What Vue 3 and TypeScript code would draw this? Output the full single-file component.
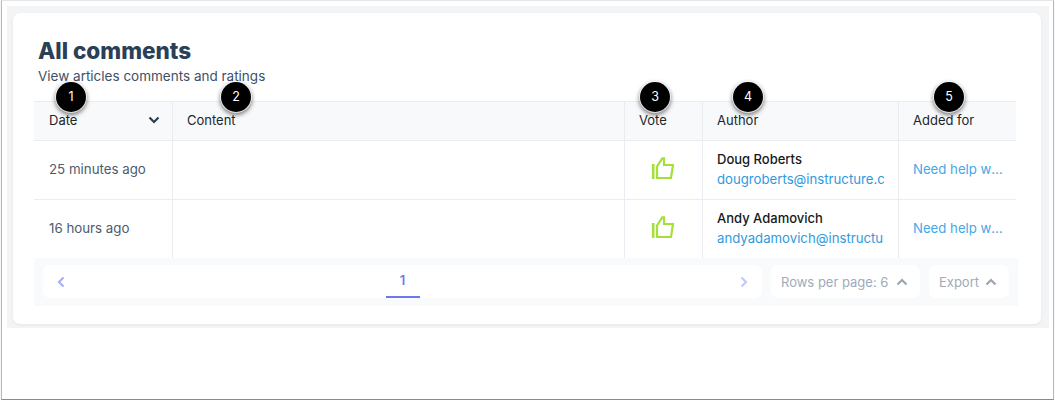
<script setup lang="ts">
interface CommentRow {
  date: string
  name: string
  email: string
  article: string
}

const columns = [
  { key: 'date', label: 'Date', badge: 1 },
  { key: 'content', label: 'Content', badge: 2 },
  { key: 'vote', label: 'Vote', badge: 3 },
  { key: 'author', label: 'Author', badge: 4 },
  { key: 'added', label: 'Added for', badge: 5 },
]

const rows: CommentRow[] = [
  { date: '25 minutes ago', name: 'Doug Roberts', email: 'dougroberts@instructure.com', article: 'Need help with this article' },
  { date: '16 hours ago', name: 'Andy Adamovich', email: 'andyadamovich@instructure.com', article: 'Need help with this article' },
]
</script>

<template>
  <div class="window">
    <div class="page">
      <section class="card">
        <h1 class="title">All comments</h1>
        <p class="subtitle">View articles comments and ratings</p>

        <div class="table">
          <div class="row head">
            <div v-for="col in columns" :key="col.key" :class="`cell cell-${col.key}`">
              <span class="badge" :class="`badge-${col.key}`">{{ col.badge }}</span>
              <span>{{ col.label }}</span>
              <svg v-if="col.key === 'date'" class="sort" width="12" height="8" viewBox="0 0 12 8">
                <path d="M1.5 1.5 6 6l4.5-4.5" fill="none" stroke="#2b3f52" stroke-width="2.2" />
              </svg>
            </div>
          </div>

          <div v-for="(row, i) in rows" :key="row.email" class="row body" :class="{ last: i === rows.length - 1 }">
            <div class="cell cell-date">{{ row.date }}</div>
            <div class="cell cell-content"></div>
            <div class="cell cell-vote">
              <svg width="24" height="24" viewBox="0 0 24 24" fill="none" stroke="#a4e03c" stroke-width="2.2">
                <path d="M2.2 8V23" stroke-width="2.6" />
                <path d="M6 22V10.5L11.3 2.3H13V9H22L20 22Z" />
              </svg>
            </div>
            <div class="cell cell-author">
              <div class="author-name">{{ row.name }}</div>
              <a class="author-email">{{ row.email }}</a>
            </div>
            <div class="cell cell-added">
              <a class="article">{{ row.article }}</a>
            </div>
          </div>

          <div class="footer">
            <div class="pager box">
              <svg width="8" height="12" viewBox="0 0 8 12">
                <path d="M6.5 1.5 2 6l4.5 4.5" fill="none" stroke="#a9adfb" stroke-width="2.2" />
              </svg>
              <span class="page-num">1</span>
              <svg width="8" height="12" viewBox="0 0 8 12">
                <path d="M1.5 1.5 6 6l-4.5 4.5" fill="none" stroke="#c4c7fc" stroke-width="2.2" />
              </svg>
            </div>
            <div class="box select rows-select">
              <span>Rows per page: 6</span>
              <svg width="12" height="8" viewBox="0 0 12 8">
                <path d="M1.5 6.5 6 2l4.5 4.5" fill="none" stroke="#9aa5b5" stroke-width="2.2" />
              </svg>
            </div>
            <div class="box select export-select">
              <span>Export</span>
              <svg width="12" height="8" viewBox="0 0 12 8">
                <path d="M1.5 6.5 6 2l4.5 4.5" fill="none" stroke="#9aa5b5" stroke-width="2.2" />
              </svg>
            </div>
          </div>
        </div>
      </section>
    </div>
  </div>
</template>

<style>
html,
body {
  margin: 0;
  background: #fff;
}
</style>

<style scoped>
.window {
  box-sizing: border-box;
  width: 1053px;
  height: 400px;
  margin-left: 1px;
  padding: 5px 4px 0 5px;
  background: #fff;
  border-top: 1px solid #e6e6e6;
  border-left: 1px solid #b9b9b9;
  border-right: 1px solid #b9b9b9;
  border-bottom: 1px solid #8a8a8a;
  box-shadow: 0 1px 1px rgba(0, 0, 0, 0.2);
  font-family: Inter, "Open Sans", sans-serif;
  overflow: hidden;
}

.page {
  box-sizing: border-box;
  height: 322px;
  padding: 7px 8px 4px 6px;
  background: #f3f4f5;
}

.card {
  box-sizing: border-box;
  height: 311px;
  padding: 25px 22px 0 21px;
  background: #fff;
  border-radius: 7px;
  box-shadow: 0 1px 3px rgba(0, 0, 0, 0.06);
}

.title {
  margin: 0 0 0 4px;
  font-size: 22.5px;
  line-height: 26px;
  font-weight: 800;
  color: #2a4056;
}

.subtitle {
  margin: 4px 0 0 4px;
  font-size: 13.5px;
  line-height: 17px;
  color: #3d5166;
}

.table {
  margin-top: 16px;
}

.row {
  display: flex;
  width: 982px;
}

.head {
  height: 40px;
  background: #f8f9fb;
  border-top: 1px solid #e9edf2;
  border-bottom: 1px solid #e9edf2;
  box-sizing: border-box;
  font-size: 13px;
  color: #20262c;
}

.body {
  height: 59px;
  box-sizing: border-box;
  border-bottom: 1px solid #e9edf2;
  font-size: 13.3px;
  color: #4a5c70;
}

.body.last {
  height: 58px;
  border-bottom: 0;
}

.cell {
  position: relative;
  box-sizing: border-box;
  display: flex;
  align-items: center;
  padding-left: 14px;
  padding-bottom: 2px;
  border-right: 1px solid #e9edf2;
}

.cell-date {
  width: 139px;
  padding-left: 15px;
}

.cell-content {
  width: 452px;
}

.cell-vote {
  width: 78px;
}

.cell-author {
  width: 196px;
  flex-direction: column;
  align-items: flex-start;
  justify-content: center;
  gap: 4px;
}

.cell-added {
  width: 117px;
  border-right: 0;
}

.head .cell-date {
  justify-content: space-between;
  padding-right: 12px;
}

.body .cell-vote {
  justify-content: center;
  padding-left: 0;
  padding-right: 1px;
  padding-bottom: 4px;
}

.badge {
  position: absolute;
  top: -20px;
  width: 30px;
  height: 30px;
  border-radius: 50%;
  background: #000;
  color: #fff;
  font-size: 12.5px;
  line-height: 30px;
  text-align: center;
  box-shadow: 0 0 0 1px rgba(255, 255, 255, 0.7), 0 2px 4px 1px rgba(0, 0, 0, 0.5);
}

.badge-date {
  left: 22px;
}

.badge-content {
  left: 48px;
}

.badge-vote {
  left: 15px;
}

.badge-author {
  left: 30px;
}

.badge-added {
  left: 35px;
}

.author-name {
  font-size: 13px;
  font-weight: 500;
  color: #16191c;
}

.author-email {
  display: block;
  width: 167px;
  overflow: hidden;
  white-space: nowrap;
  font-size: 13.2px;
  color: #2f9ae0;
}

.article {
  display: block;
  width: 90px;
  overflow: hidden;
  white-space: nowrap;
  text-overflow: ellipsis;
  font-size: 13.2px;
  color: #45a8e6;
}

.footer {
  box-sizing: border-box;
  display: flex;
  gap: 9px;
  width: 984px;
  height: 48px;
  padding: 7px 9px 8px 9px;
  background: #f9fafc;
  font-size: 13px;
  color: #a0aaba;
}

.box {
  box-sizing: border-box;
  display: flex;
  align-items: center;
  height: 33px;
  background: #fff;
  border-radius: 7px;
}

.pager {
  width: 719px;
  justify-content: space-between;
  padding: 0 14px;
}

.page-num {
  align-self: stretch;
  box-sizing: border-box;
  width: 34px;
  line-height: 30px;
  text-align: center;
  font-weight: 600;
  color: #6d78f0;
  border-bottom: 2px solid #6d78f0;
}

.select {
  justify-content: space-between;
}

.rows-select {
  width: 149px;
  padding: 0 12px 0 10px;
}

.export-select {
  width: 80px;
  padding: 0 12px 0 10px;
}
</style>
